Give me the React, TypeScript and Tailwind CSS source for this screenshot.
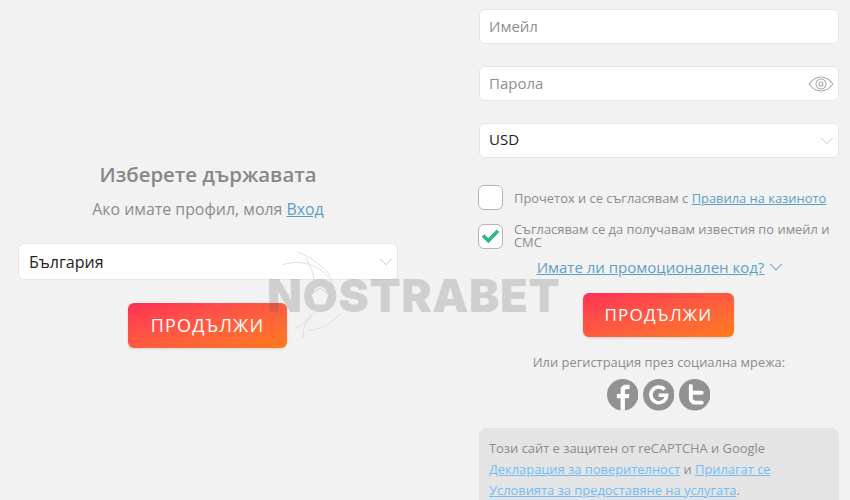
import { ChevronDown } from "lucide-react"

const font = "font-['Open_Sans',sans-serif]"

function Field({ label, dark, children }: { label: string; dark?: boolean; children?: React.ReactNode }) {
  return (
    <div className="flex h-[35px] items-center justify-between rounded-md border border-[#e6e6e6] bg-white pl-[9px] pr-[3px]">
      <span className={`text-[15px] ${dark ? "-mt-[2px] text-[#222]" : "text-[#8f8f8f]"}`}>{label}</span>
      {children}
    </div>
  )
}

function SelectArrow() {
  return <ChevronDown className="-mr-[3px] h-[22px] w-[22px] text-[#c4c4c4]" strokeWidth={1} />
}

function EyeIcon() {
  return (
    <svg viewBox="0 0 26 16" className="mr-[1px] h-[16px] w-[26px]" fill="none" stroke="#a8a8a8" strokeWidth="1.1">
      <path d="M1 8C5 3 9 1 13 1s8 2 12 7c-4 5-8 7-12 7S5 13 1 8z" />
      <circle cx="13" cy="8" r="5" />
      <circle cx="13" cy="8" r="2" />
    </svg>
  )
}

function PrimaryButton({ className }: { className: string }) {
  return (
    <button
      type="button"
      className={`rounded-md bg-gradient-to-br from-[#ff2d55] to-[#ff7a14] tracking-[1.2px] text-white shadow-sm ${className}`}
    >
      ПРОДЪЛЖИ
    </button>
  )
}

function Social() {
  return (
    <div className="mr-[1px] flex justify-center gap-[4.5px]">
      <svg viewBox="0 0 32 32" className="h-[31.5px] w-[31.5px]">
        <circle cx="16" cy="16" r="16" fill="#929292" />
        <path d="M18.200 32V19.500h4l.6-4.300h-4.600v-2.700c0-1.500.5-2.300 2.300-2.300h2.500V6.200c-.8-.1-2-.3-3.500-.3-3.400 0-5.700 2-5.700 5.800v3.500h-3.800v4.300h3.800V32z" fill="#fff" />
      </svg>
      <svg viewBox="0 0 32 32" className="h-[31.5px] w-[31.5px]">
        <circle cx="16" cy="16" r="16" fill="#929292" />
        <path d="M22 10.800A8 8 0 1 0 24 16.500H16" fill="none" stroke="#fff" strokeWidth="3.600" />
      </svg>
      <svg viewBox="0 0 32 32" className="h-[31.5px] w-[31.5px]">
        <circle cx="16" cy="16" r="16" fill="#929292" />
        <path d="M12 7v12.500a4.500 4.500 0 0 0 4.500 4.500H23M12 14h11" fill="none" stroke="#fff" strokeWidth="4" strokeLinecap="round" />
      </svg>
    </div>
  )
}

function Watermark() {
  return (
    <div className="pointer-events-none absolute left-[267px] top-[272px] flex h-[48px] items-center">
      <span className="font-['Inter',sans-serif] text-[45.5px] font-black leading-none tracking-[0.6px] text-[#555]/[0.22]">
        NOSTRABET
      </span>
      <svg viewBox="0 0 90 90" className="absolute left-[3px] top-[-22px] h-[90px] w-[90px]" fill="none" stroke="#dedede" strokeWidth="1">
        <path d="M28 2c12 5 26 14 34 26M12 15c12-4 26-4 40 6 5 4 9 8 11 13M36 8c4 8 8 14 8 24M26 78c8-4 16-10 20-18M33 88c0-8 2-16 8-24M38 80c12 0 24-6 32-16" />
        <path d="M50 38l9 6.500-3.500 10.500h-11L41 44.500z" fill="#f2f2f2" stroke="#cfcfcf" />
      </svg>
    </div>
  )
}

export default function App() {
  return (
    <div className={`relative flex h-[500px] w-[850px] overflow-hidden bg-[#f2f2f2] ${font}`}>
      <section className="w-[479px] pl-[18px] pt-[160px]">
        <div className="flex w-[380px] flex-col items-center">
          <h2 className="text-[20.4px] font-semibold leading-[28px] text-[#878787]">Изберете държавата</h2>
          <p className="mt-[9px] text-[15.9px] leading-[24px] text-[#8c8c8c]">
            Ако имате профил, моля <a className="text-[#5c9fc7] underline">Вход</a>
          </p>
          <div className="mt-[22px] flex h-[37px] w-full items-center justify-between rounded-md border border-[#e6e6e6] bg-white pl-[10px] pr-[3px]">
            <span className="text-[16px] text-[#222]">България</span>
            <SelectArrow />
          </div>
          <PrimaryButton className="mr-[1px] mt-[23px] h-[45px] w-[159px] text-[18px]" />
        </div>
      </section>

      <section className="w-[360px] pt-[9px]">
        <div className="flex flex-col gap-[22px]">
          <Field label="Имейл" />
          <Field label="Парола">
            <EyeIcon />
          </Field>
          <Field label="USD" dark>
            <SelectArrow />
          </Field>
        </div>

        <div className="mt-[27px] flex items-center gap-[11px] text-[12.9px] leading-[14px] text-[#8c8c8c]">
          <span className="-ml-[1px] h-[25px] w-[25px] shrink-0 rounded-md border border-[#b5b5b5] bg-white" />
          <span>
            Прочетох и се съгласявам с <a className="text-[#5c9fc7] underline">Правила на казиното</a>
          </span>
        </div>
        <div className="mt-[13px] flex items-center gap-[11px] text-[12.9px] leading-[13px] text-[#8c8c8c]">
          <span className="-ml-[1px] flex h-[25px] w-[25px] shrink-0 items-center justify-center rounded-md border border-[#b5b5b5] bg-white">
            <svg viewBox="0 0 20 16" className="h-[14px] w-[19px]" fill="none" stroke="#2fb58c" strokeWidth="4">
              <path d="M1.500 7.500L7.500 13.500L18.500 2" />
            </svg>
          </span>
          <span>Съгласявам се да получавам известия по имейл и СМС</span>
        </div>

        <div className="mt-[6px] flex items-center justify-center gap-[1px] pl-[6px] text-[15px] leading-[24px]">
          <a className="text-[#5c9fc7] underline">Имате ли промоционален код?</a>
          <ChevronDown className="h-[22px] w-[22px] text-[#5c9fc7]" strokeWidth={1.1} />
        </div>

        <div className="mt-[14px] flex justify-center">
          <PrimaryButton className="mr-[1px] h-[44px] w-[151px] text-[17px]" />
        </div>

        <p className="mt-[15px] text-center text-[12.9px] leading-[20px] text-[#8c8c8c]">
          Или регистрация през социална мрежа:
        </p>
        <div className="mt-[7px]">
          <Social />
        </div>

        <div className="mt-[17px] rounded-lg bg-[#e4e4e4] p-[10px] text-[12.9px] leading-[21px] text-[#8c8c8c]">
          Този сайт е защитен от reCAPTCHA и Google{" "}
          <a className="text-[#72bdf5] underline">Декларация за поверителност</a> и{" "}
          <a className="text-[#72bdf5] underline">Прилагат се Условията за предоставяне на услугата</a>.
        </div>
      </section>

      <Watermark />
    </div>
  )
}
